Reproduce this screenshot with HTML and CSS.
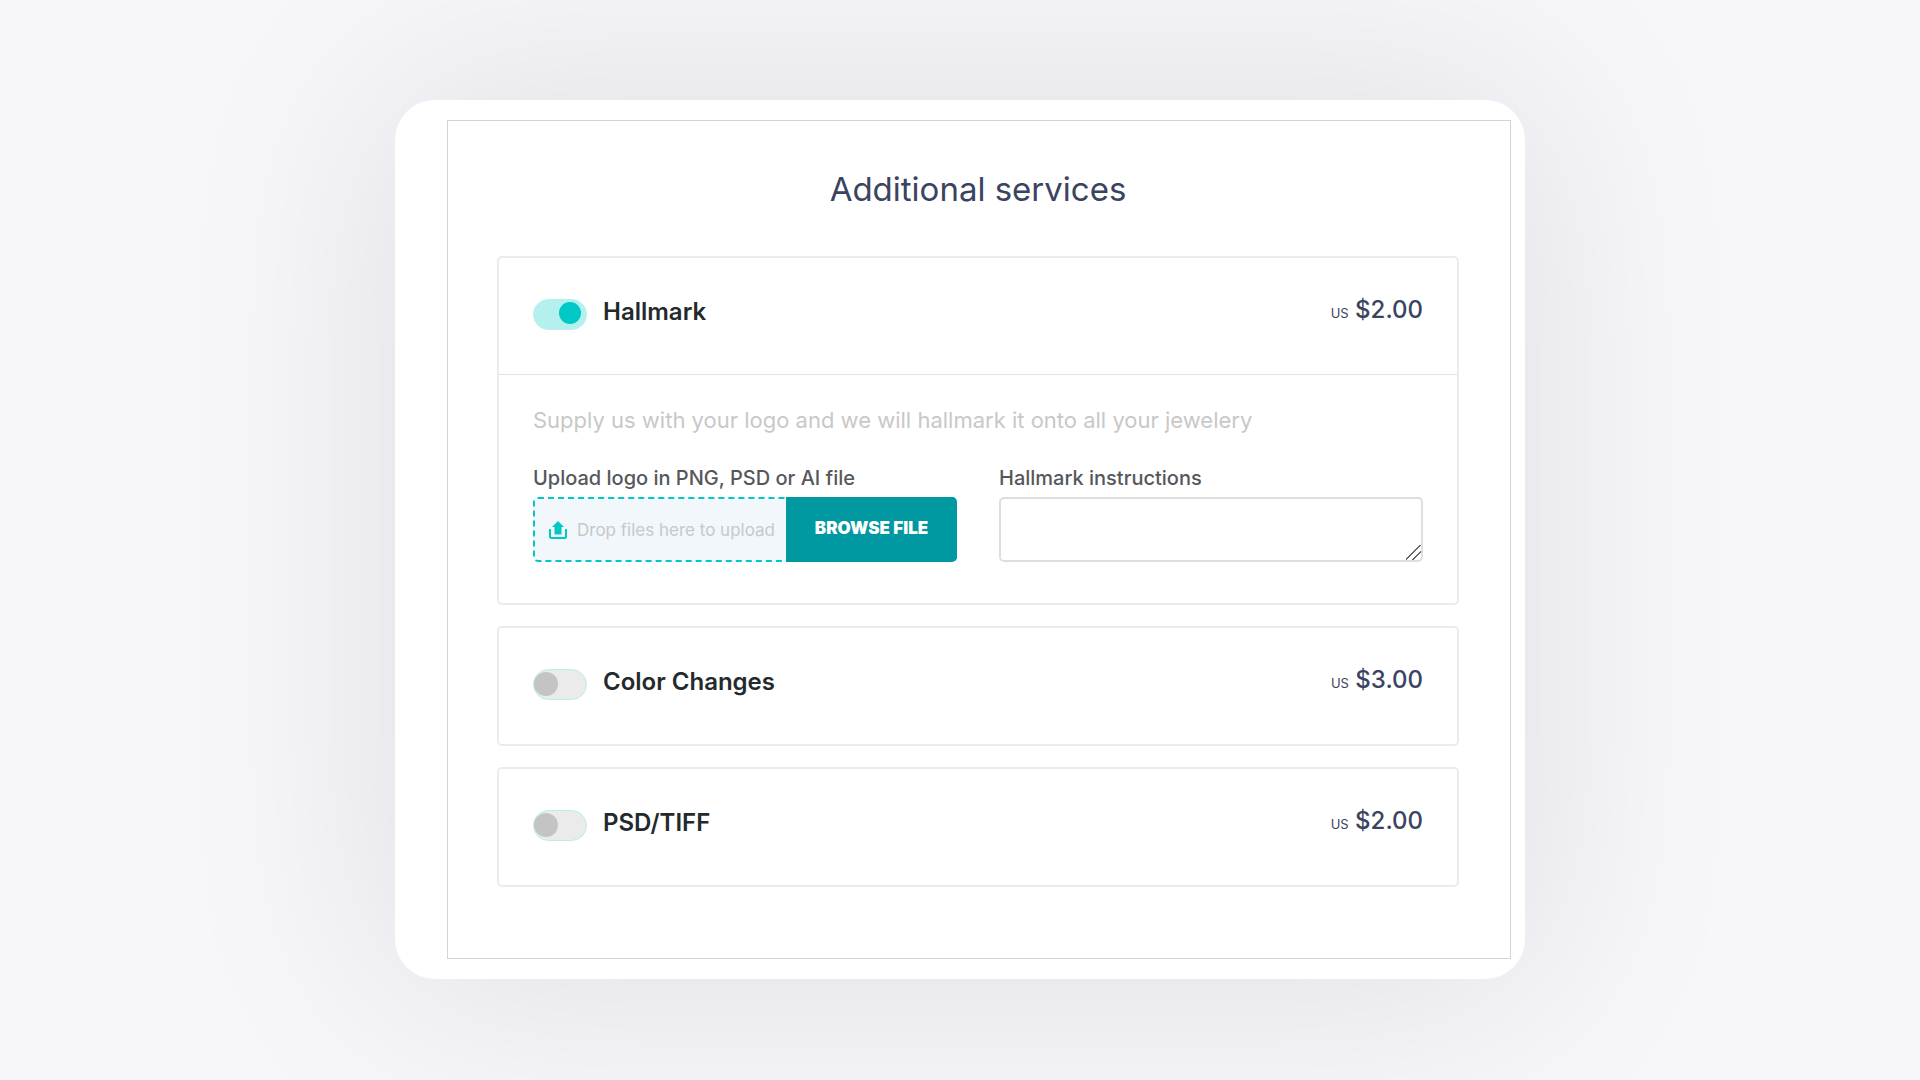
FILE: index.html
```html
<!DOCTYPE html>
<html lang="en">
<head>
    <meta charset="UTF-8">
    <meta name="viewport" content="width=device-width, initial-scale=1.0">
    <title>Additional services</title>
    <link rel="stylesheet" href="styles.css">
</head>
<body>
    <main class="card">
        <form class="panel">
            <h1>Additional services</h1>

            <section class="service">
                <div class="service-head">
                    <label class="service-name">
                        <input type="checkbox" class="toggle" checked>
                        Hallmark
                    </label>
                    <div class="price"><small>US</small> $2.00</div>
                </div>
                <div class="service-body">
                    <p class="hint">Supply us with your logo and we will hallmark it onto all your jewelery</p>
                    <div class="fields">
                        <div class="field">
                            <label for="browse">Upload logo in PNG, PSD or AI file</label>
                            <div class="dropzone">
                                <div class="drop-text">
                                    <svg class="upload-icon" viewBox="0 0 18 18">
                                        <path d="M1 8v7.500q0 1.500 1.500 1.500h13q1.500 0 1.500-1.500V8" fill="none" stroke="#00c9c5" stroke-width="2"/>
                                        <path d="M9 0l6 6h-2.500V13.500h-7V6H3z" fill="#00c9c5"/>
                                    </svg>
                                    <span>Drop files here to upload</span>
                                </div>
                                <button type="button" id="browse">BROWSE FILE</button>
                            </div>
                        </div>
                        <div class="field">
                            <label for="instructions">Hallmark instructions</label>
                            <textarea id="instructions"></textarea>
                        </div>
                    </div>
                </div>
            </section>

            <section class="service">
                <div class="service-head">
                    <label class="service-name">
                        <input type="checkbox" class="toggle">
                        Color Changes
                    </label>
                    <div class="price"><small>US</small> $3.00</div>
                </div>
            </section>

            <section class="service">
                <div class="service-head">
                    <label class="service-name">
                        <input type="checkbox" class="toggle">
                        PSD/TIFF
                    </label>
                    <div class="price"><small>US</small> $2.00</div>
                </div>
            </section>
        </form>
    </main>
</body>
</html>
```

FILE: styles.css
```css
* {
    box-sizing: border-box;
}
body {
    margin: 0;
    min-height: 100vh;
    padding: 100px 20px;
    font-family: Inter, "Liberation Sans", sans-serif;
    background-color: #f7f6fb;
    color: #232a2d;
}
.card {
    max-width: 1130px;
    margin: 0 auto;
    padding: 20px 14px 20px 52px;
    background-color: white;
    border-radius: 40px;
    box-shadow: 0 0 220px 20px rgba(0, 0, 0, 0.09);
}
.panel {
    padding: 48px 51px 71px 49px;
    border: 1px solid #d4d4d4;
}
h1 {
    margin: 0 0 47px;
    font-size: 33px;
    line-height: 40px;
    font-weight: 400;
    text-align: center;
    color: #3a4460;
}
.service {
    margin-bottom: 21px;
    border: 2px solid #ebebeb;
    border-radius: 5px;
}
.service:last-child {
    margin-bottom: 0;
}
.service-head {
    display: flex;
    justify-content: space-between;
    height: 116px;
    padding: 34px 34px 0;
}
.service-name {
    display: flex;
    gap: 16px;
    height: 40px;
    align-items: center;
    font-size: 24px;
    line-height: 32px;
    font-weight: 600;
}
.toggle {
    appearance: none;
    width: 54px;
    height: 31px;
    margin: 4px 0 0;
    padding: 2px 0;
    border: 1px solid #b4f0ed;
    border-radius: 16px;
    background-color: #ebebeb;
    cursor: pointer;
}
.toggle::before {
    content: "";
    display: block;
    width: 24px;
    height: 24px;
    border-radius: 50%;
    background-color: #c4c4c4;
}
.toggle:checked {
    background-color: #b4f0ed;
}
.toggle:checked::before {
    width: 22px;
    height: 22px;
    margin-left: 25px;
    background-color: #00c9c5;
}
.price {
    font-size: 24px;
    line-height: 36px;
    font-weight: 500;
    color: #3a4460;
}
.price small {
    font-size: 13px;
    font-weight: 400;
}
.service-body {
    padding: 31px 34px 41px;
    border-top: 1px solid #e4e4e4;
}
.hint {
    margin: 0 0 32px;
    font-size: 22px;
    line-height: 28px;
    color: #c8c8c8;
}
.fields {
    display: grid;
    grid-template-columns: 1fr 1fr;
    gap: 42px;
}
.field label {
    display: block;
    margin-bottom: 7px;
    font-size: 20px;
    line-height: 24px;
    font-weight: 500;
    color: #54585b;
}
.dropzone {
    display: flex;
    height: 65px;
    border: 2px dashed #00c9c5;
    border-radius: 5px;
    background-color: #f1f7fb;
}
.drop-text {
    flex: 1;
    display: flex;
    align-items: center;
    gap: 10px;
    padding-left: 14px;
    font-size: 17px;
    white-space: nowrap;
    color: #c8c8c8;
}
.upload-icon {
    width: 18px;
    height: 18px;
}
.dropzone button {
    width: 171px;
    margin: -2px -2px -2px 0;
    padding: 0 0 4px;
    border: none;
    border-radius: 0 5px 5px 0;
    font-family: inherit;
    font-size: 17px;
    font-weight: 900;
    color: white;
    background-color: #0098a1;
    cursor: pointer;
}
textarea {
    display: block;
    width: 100%;
    height: 65px;
    border: 2px solid #dedede;
    border-radius: 5px;
    resize: vertical;
}
/* two diagonal grip lines */
textarea::-webkit-resizer {
    background: linear-gradient(135deg, transparent 46%, #666 46%, #666 51%, transparent 51%, transparent 69%, #666 69%, #666 74%, transparent 74%);
}
```
